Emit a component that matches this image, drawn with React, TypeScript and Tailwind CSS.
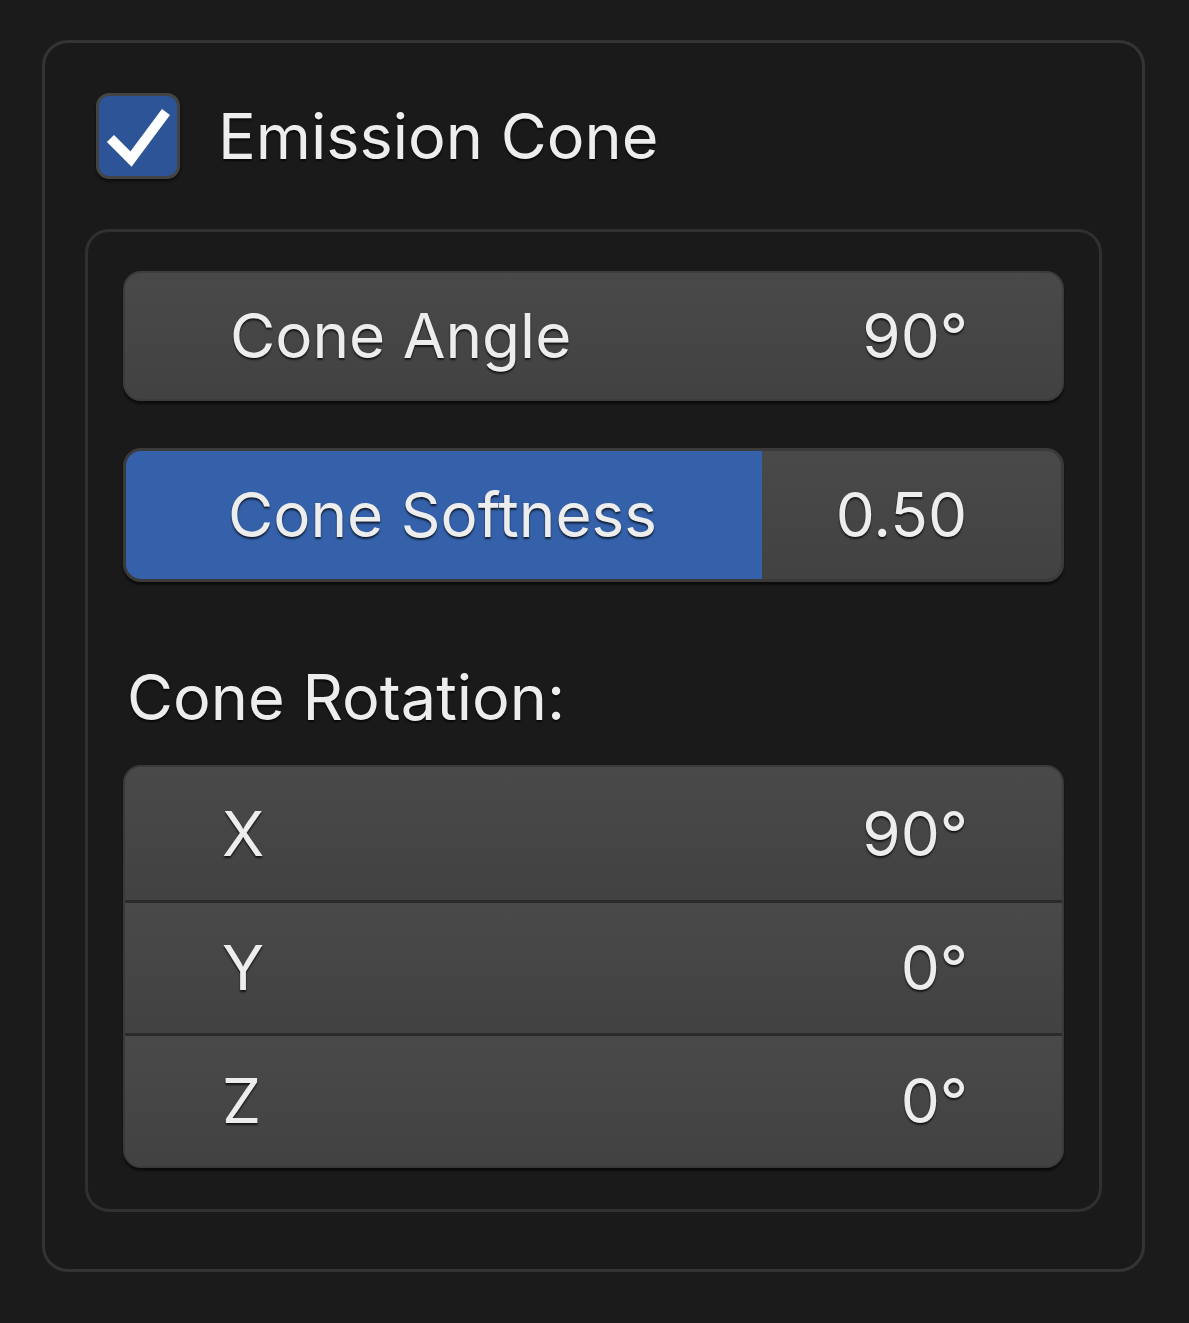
import React from "react";

const ROWS = [
  { axis: "X", value: "90°" },
  { axis: "Y", value: "0°" },
  { axis: "Z", value: "0°" },
];

const textShadow = "[text-shadow:0_2px_2px_rgba(0,0,0,0.7)]";

export default function App() {
  const softness = 0.68;

  return (
    <div
      className="min-h-[1323px] w-[1189px] bg-[#1b1b1b] pt-[40px] pl-[42px] pr-[44px] pb-[51px] text-[#ededed]"
      style={{ fontFamily: "Inter, 'Noto Sans', sans-serif" }}
    >
      {/* Outer panel */}
      <div className="h-[1232px] rounded-[26px] border-[3px] border-[#343434] bg-[#1a1a1a] px-[40px] pt-[50px]">
        {/* Header: checkbox + title */}
        <div className="flex items-center gap-[38px] pl-[11px]">
          <div className="flex h-[86px] w-[84px] items-center justify-center rounded-[13px] border-[3px] border-[#444] bg-[#2d5496] shadow-[0_2px_3px_rgba(0,0,0,0.6)]">
            <svg width="84" height="84" viewBox="0 0 84 84" className="-m-[3px]">
              <path
                d="M18 48 L35 65 L67 22"
                fill="none"
                stroke="#ffffff"
                strokeWidth="10"
                strokeLinecap="square"
                strokeLinejoin="miter"
              />
            </svg>
          </div>
          <span className={`text-[63px] leading-none ${textShadow}`}>
            Emission Cone
          </span>
        </div>

        {/* Inner panel */}
        <div className="mt-[50px] h-[983px] rounded-[24px] border-[3px] border-[#303030] bg-[#1a1a1a] px-[35px] pt-[39px]">
          {/* Cone Angle */}
          <div className="flex h-[130px] items-center justify-between rounded-[18px] border-2 border-[#3c3c3c] bg-gradient-to-b from-[#494949] to-[#424242] pl-[105px] pr-[94px] shadow-[0_3px_2px_rgba(0,0,0,0.55)]">
            <span className={`text-[62px] leading-none ${textShadow}`}>Cone Angle</span>
            <span className={`text-[62px] leading-none ${textShadow}`}>90°</span>
          </div>

          {/* Cone Softness slider */}
          <div className="relative mt-[47px] h-[134px] overflow-hidden rounded-[18px] border-[3px] border-[#3a3a3a] bg-gradient-to-b from-[#494949] to-[#424242] shadow-[0_3px_2px_rgba(0,0,0,0.55)]">
            <div
              className="absolute inset-y-0 left-0 bg-[#3461a9]"
              style={{ width: `${softness * 100}%` }}
            />
            <div className="relative flex h-full items-center justify-between pl-[102px] pr-[94px]">
              <span className={`text-[62px] leading-none ${textShadow}`}>Cone Softness</span>
              <span className={`text-[62px] leading-none ${textShadow}`}>0.50</span>
            </div>
          </div>

          {/* Cone Rotation */}
          <div className={`mt-[84px] pl-[4px] text-[63px] leading-none ${textShadow}`}>
            Cone Rotation:
          </div>

          <div className="mt-[36px] flex flex-col overflow-hidden rounded-[18px] border-2 border-[#3a3a3a] bg-[#444] shadow-[0_3px_2px_rgba(0,0,0,0.55)]">
            {ROWS.map((r, i) => (
              <div
                key={r.axis}
                className={`flex h-[133px] items-center justify-between bg-gradient-to-b from-[#494949] to-[#424242] pl-[97px] pr-[94px] ${
                  i > 0 ? "border-t-[3px] border-[#2b2b2b]" : ""
                }`}
              >
                <span className={`text-[62px] leading-none ${textShadow}`}>{r.axis}</span>
                <span className={`text-[62px] leading-none ${textShadow}`}>{r.value}</span>
              </div>
            ))}
          </div>
        </div>
      </div>
    </div>
  );
}
